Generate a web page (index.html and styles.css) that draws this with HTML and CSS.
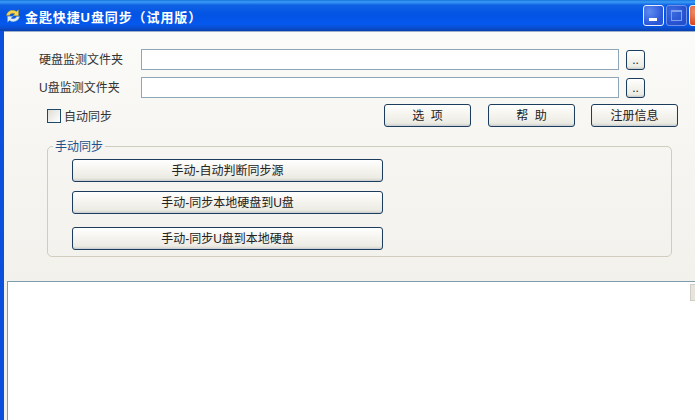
FILE: index.html
```html
<!DOCTYPE html>
<html lang="zh-CN">
<head>
<meta charset="utf-8">
<title>金匙快捷U盘同步（试用版）</title>
<link rel="stylesheet" href="styles.css">
</head>
<body>
<div class="window">
  <header class="titlebar">
    <svg class="app-icon" viewBox="0 0 16 16" width="16" height="16" aria-hidden="true">
      <path d="M1.500 7.500C2 3 7.500 .8 11.500 3.500L13.500 1.800V7.800H7.800L10 5.800C7.500 4.500 5.200 5.500 4.400 7.500Z" fill="#f6d84a" stroke="#a8861c" stroke-width=".4"/>
      <path d="M14.500 8.500C14 13 8.500 15.200 4.500 12.500L2.500 14.200V8.200H8.200L6 10.200C8.500 11.500 10.800 10.500 11.600 8.500Z" fill="#dcecf6" stroke="#5f93bb" stroke-width=".4"/>
    </svg>
    <h1 class="title">金匙快捷U盘同步（试用版）</h1>
    <div class="controls">
      <span class="ctl ctl-min"><i></i></span>
      <span class="ctl ctl-max"><i></i></span>
      <span class="ctl ctl-close"></span>
    </div>
  </header>
  <main class="client">
    <div class="form">
      <div class="row">
        <label class="label">硬盘监测文件夹</label>
        <div class="input"></div>
        <button class="btn browse">..</button>
      </div>
      <div class="row">
        <label class="label">U盘监测文件夹</label>
        <div class="input"></div>
        <button class="btn browse">..</button>
      </div>
      <div class="actions">
        <label class="check"><span class="box"></span>自动同步</label>
        <div class="action-btns">
          <button class="btn action">选&nbsp;&nbsp;项</button>
          <button class="btn action">帮&nbsp;&nbsp;助</button>
          <button class="btn action">注册信息</button>
        </div>
      </div>
      <section class="group">
        <span class="legend">手动同步</span>
        <button class="btn wide">手动-自动判断同步源</button>
        <button class="btn wide">手动-同步本地硬盘到U盘</button>
        <button class="btn wide third">手动-同步U盘到本地硬盘</button>
      </section>
    </div>
    <div class="log"><div class="scroll-thumb"></div></div>
  </main>
</div>
</body>
</html>
```
FILE: styles.css
```css
* { box-sizing: border-box; }
html, body { margin: 0; height: 100%; overflow: hidden; }
body {
  font-family: "Liberation Sans", "Noto Sans CJK SC", sans-serif;
  font-size: 12px;
  color: #111;
  background: #fff;
}
.window {
  width: 695px;
  height: 420px;
  display: flex;
  flex-direction: column;
  background: #0a50dc;
}
.titlebar {
  height: 31px;
  flex: none;
  display: flex;
  align-items: center;
  padding: 1px 0 0 5px;
  background: linear-gradient(to bottom, #1a74e0 0, #3a9cf4 2px, #0f62e4 5px, #0354e4 14px, #0558ee 24px, #0a4fd0 28px, #083fb0 31px);
}
.app-icon { flex: none; }
.title {
  margin: 0 0 0 4px;
  font-family: "Liberation Sans", "Noto Sans CJK SC", sans-serif;
  font-size: 13px;
  font-weight: 700;
  letter-spacing: .9px;
  color: #fff;
  white-space: nowrap;
  flex: 1;
}
.controls {
  display: flex;
  gap: 2px;
  margin-right: -15px;
  margin-top: -1px;
  flex: none;
}
.ctl {
  width: 21px;
  height: 21px;
  border-radius: 3px;
  border: 1px solid #e8f0ff;
  display: block;
  position: relative;
  background: radial-gradient(circle at 30% 30%, #5f8cf0, #2a56d8 70%);
}
.ctl-max { border-color: #6f92e8; background: radial-gradient(circle at 30% 30%, #3c6ce0, #2450d0 70%); }
.ctl-close { background: radial-gradient(circle at 30% 30%, #f09070, #d8481c 70%); }
.ctl-min i {
  position: absolute;
  left: 5px;
  bottom: 4px;
  width: 8px;
  height: 3px;
  background: #fff;
}
.ctl-max i {
  position: absolute;
  left: 4px;
  top: 4px;
  width: 11px;
  height: 11px;
  border: 1px solid #7fa0ee;
  border-top-width: 2px;
}
.client {
  flex: 1;
  margin-left: 4px;
  display: flex;
  flex-direction: column;
  background: linear-gradient(to bottom, #fbfbf9 0, #f6f5f1 120px, #f2f1ec 250px);
  border-top: 1px solid #9cb0c8;
  min-height: 0;
}
.form { height: 249px; flex: none; padding: 17px 0 0; }
.row {
  display: flex;
  align-items: center;
  height: 21px;
  margin-bottom: 7px;
}
.label {
  width: 137px;
  padding-left: 35px;
  white-space: nowrap;
  line-height: 16px;
  color: #333;
}
.input {
  width: 478px;
  height: 21px;
  background: #fff;
  border: 1px solid #8fa6b8;
}
.btn {
  font-family: "Liberation Sans", "Noto Sans CJK SC", sans-serif;
  font-size: 12px;
  line-height: 14px;
  color: #222;
  padding: 0;
  border: 1px solid #1c3d5e;
  border-radius: 3px;
  background: linear-gradient(to bottom, #ffffff 0, #f6f5f0 40%, #ecebe4 85%, #d8d6cc 100%);
  box-shadow: inset 0 -1px 1px #c8cfd6;
}
.browse { width: 19px; height: 20px; margin-left: 7px; }
.actions {
  display: flex;
  align-items: center;
  height: 23px;
  margin-top: -1px;
  padding-left: 43px;
}
.check {
  display: flex;
  align-items: center;
  gap: 3px;
  width: 337px;
  color: #333;
}
.box {
  width: 14px;
  height: 14px;
  border: 1px solid #1c4a68;
  background: linear-gradient(135deg, #dedcd4, #fff);
}
.action-btns { display: flex; gap: 17px; }
.action-btns .action:last-child { margin-left: -1px; }
.action { width: 87px; height: 23px; }
.group {
  position: relative;
  margin: 19px 0 0 43px;
  width: 625px;
  height: 111px;
  border: 1px solid #d0ccbe;
  border-radius: 5px;
  padding: 12px 0 0 24px;
  display: flex;
  flex-direction: column;
  align-items: flex-start;
}
.legend {
  position: absolute;
  left: 5px;
  top: -8px;
  padding: 0 2px;
  line-height: 16px;
  background: #f6f5f1;
  color: #1c4f8c;
}
.wide { width: 311px; height: 23px; margin-bottom: 9px; flex: none; }
.wide.third { margin-top: 4px; }
.log {
  flex: 1;
  margin-left: 3px;
  position: relative;
  background: #fff;
  border-top: 1px solid #7f9db0;
  border-left: 1px solid #8a9aa4;
}
.scroll-thumb {
  position: absolute;
  right: 0;
  top: 2px;
  width: 5px;
  height: 17px;
  background: #e6e4dc;
  border: 1px solid #cfcdc4;
  border-right: 0;
}
```
